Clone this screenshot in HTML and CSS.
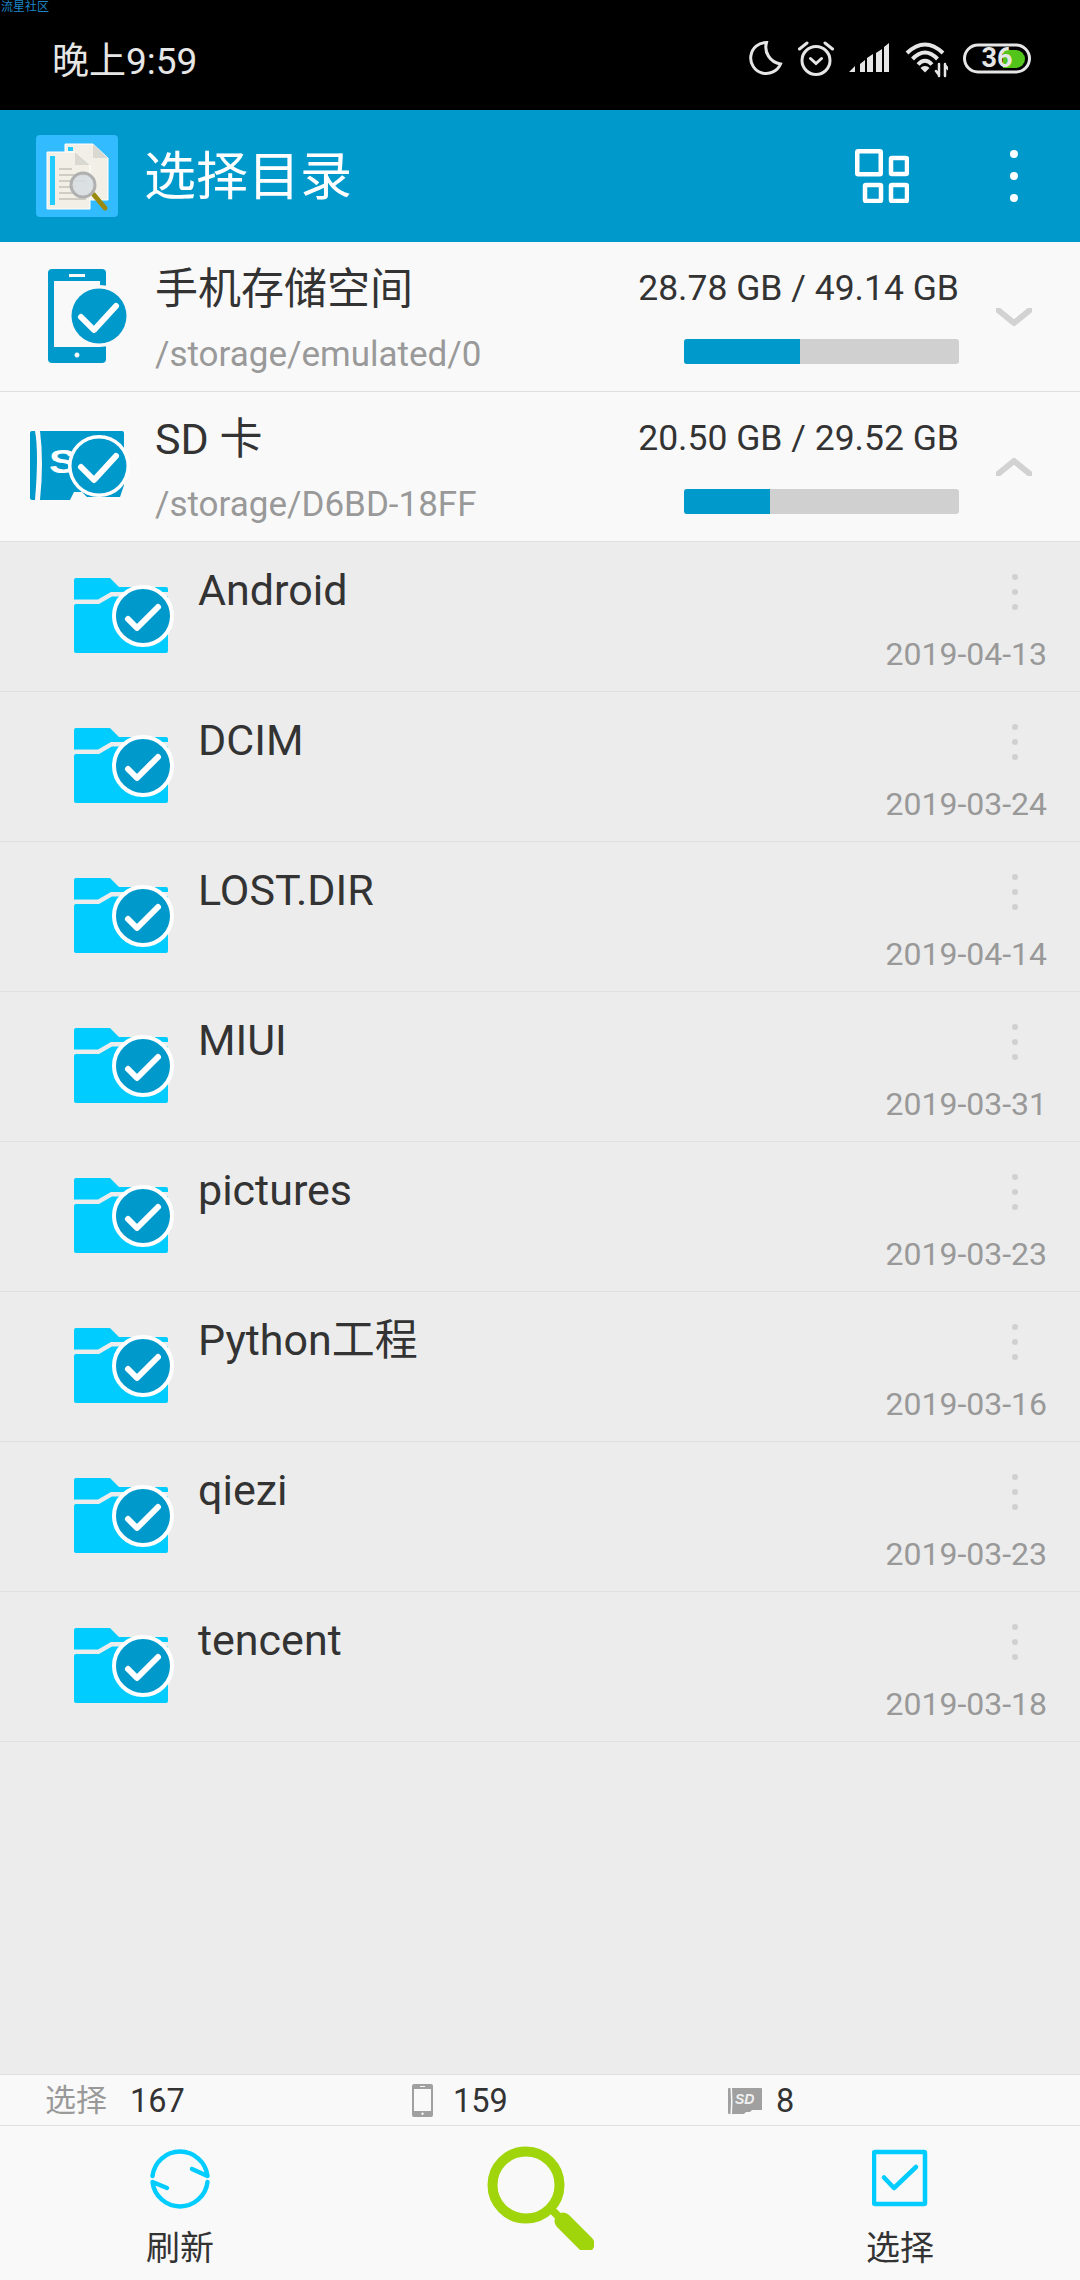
FILE: index.html
```html
<!DOCTYPE html>
<html lang="zh">
<head>
<meta charset="utf-8">
<title>选择目录</title>
<link rel="stylesheet" href="styles.css">
</head>
<body>
<svg class="sprite" width="0" height="0" aria-hidden="true">
  <symbol id="folder" viewBox="0 0 130 110">
    <path class="folder-fill" d="M16 18H50L59 27H106a2 2 0 0 1 2 2V32H51L38 39.500H14V20a2 2 0 0 1 2-2Z"/>
    <path class="folder-fill" d="M16 44H39L52 36.500H108V91a2 2 0 0 1-2 2H16a2 2 0 0 1-2-2V46a2 2 0 0 1 2-2Z"/>
    <circle class="check-ring" cx="83" cy="56" r="29"/>
    <path class="check-mark" d="M68 59L77 68L98 47"/>
  </symbol>
  <symbol id="kebab" viewBox="0 0 10 40">
    <circle cx="5" cy="5" r="3"/>
    <circle cx="5" cy="20" r="3"/>
    <circle cx="5" cy="35" r="3"/>
  </symbol>
</svg>

<div class="app">
  <div class="watermark">流星社区</div>

  <header class="status">
    <span class="time">晚上9:59</span>
    <div class="status-icons">
      <svg class="si" width="34" height="38" viewBox="0 0 34 38"><path class="si-line" d="M17.500 2.500A15.500 15.500 0 1 0 31.500 24A17 17 0 0 1 17.500 2.500Z"/></svg>
      <svg class="si" width="36" height="38" viewBox="0 0 36 38"><circle class="si-line" cx="18" cy="20.500" r="14"/><path class="si-line" d="M12.500 18.500L18 23.500L23.500 18.500M1.500 9L9 3M34.500 9L27 3"/></svg>
      <svg class="si" width="40" height="38" viewBox="0 0 40 38"><path class="si-fill" d="M0 32L6 26V32ZM11 24L16 20V32H11ZM18 18L24 14V32H18ZM27 13L33 9V32H27ZM35 7L40 3V32H35Z"/></svg>
      <svg class="si" width="44" height="38" viewBox="0 0 44 38"><path class="si-line wide" d="M3 13Q21-4 39 13M8.500 19Q21 6 33.500 19M14 24.500Q21 17 28 24.500"/><path class="si-fill" d="M21 26Q24 26 25.500 28L21 32.500L16.500 28Q18 26 21 26Z"/><path class="si-line thin" d="M35 24V36M41 24V36M32 31L35 35M44 29L41 25"/></svg>
      <svg class="si" width="68" height="38" viewBox="0 0 68 38"><rect class="si-line" x="1.500" y="5" width="65" height="27" rx="13.500"/><path class="batt-green" d="M40 10H53a9 9 0 0 1 0 18H40Z"/><text class="batt-num" x="34" y="27" text-anchor="middle">36</text></svg>
    </div>
  </header>

  <div class="appbar">
    <div class="brand">
      <svg class="brand-icon" width="82" height="82" viewBox="0 0 82 82">
        <rect class="brand-bg" width="82" height="82" rx="4"/>
        <path class="page-b" d="M29 9H57L72 23V65H29Z"/>
        <path class="page-fold" d="M57 9V23H72Z"/>
        <rect class="page-strip" x="32" y="12" width="5" height="4"/>
        <path class="page-a" d="M11 17H39L54 30V74H11Z"/>
        <path class="page-fold" d="M39 17V30H54Z"/>
        <rect class="page-strip" x="14" y="21" width="5" height="49"/>
        <path class="page-text" d="M23 34H36M23 40H50M23 46H50M23 52H40M23 58H40M23 64H50"/>
        <path class="loupe-handle" d="M58 60L69 73"/>
        <circle class="loupe" cx="47" cy="50" r="12"/>
      </svg>
      <h1 class="title">选择目录</h1>
    </div>
    <div class="app-actions">
      <svg class="grid-icon" width="54" height="54" viewBox="0 0 54 54">
        <rect x="2.250" y="2.250" width="23.500" height="23" rx="1"/>
        <rect x="36" y="9" width="16" height="16" rx="1"/>
        <rect x="10" y="36" width="16" height="16" rx="1"/>
        <rect x="36" y="36" width="16" height="16" rx="1"/>
      </svg>
      <svg class="dots" width="8" height="52" viewBox="0 0 8 52"><circle cx="4" cy="4" r="4"/><circle cx="4" cy="26" r="4"/><circle cx="4" cy="48" r="4"/></svg>
    </div>
  </div>

  <section class="storage">
    <svg class="st-icon" width="130" height="130" viewBox="0 0 130 130">
      <path class="blue-fill" fill-rule="evenodd" d="M52 27H102a4 4 0 0 1 4 4V117a4 4 0 0 1-4 4H52a4 4 0 0 1-4-4V31a4 4 0 0 1 4-4ZM54 39V105H100V39ZM69 32V35H85V32ZM77 110.500a2.500 2.500 0 1 0 .01 0Z"/>
      <circle class="ring" cx="99" cy="74" r="31"/>
      <circle class="blue-fill" cx="99" cy="74" r="27.500"/>
      <path class="check-mark" d="M81 75L94 88L116 64"/>
    </svg>
    <div class="st-text">
      <div class="st-name">手机存储空间</div>
      <div class="st-path">/storage/emulated/0</div>
    </div>
    <div class="st-usage">
      <div class="st-val">28.78 GB / 49.14 GB</div>
      <div class="bar"><div class="bar-fill" style="width:116px"></div></div>
    </div>
    <svg class="chev" width="36" height="18" viewBox="0 0 36 18"><path d="M2 2L18 15L34 2"/></svg>
  </section>

  <section class="storage">
    <svg class="st-icon" width="130" height="130" viewBox="0 0 130 130">
      <path class="blue-fill" d="M32 39H35Q39 60 35 108H32a2 2 0 0 1-2-2V41a2 2 0 0 1 2-2ZM40 39H122a2 2 0 0 1 2 2V93L120 105H87L82 100H74L70 108H40Q44 70 40 39Z"/>
      <text class="sd-s" transform="translate(49 81) scale(1.250 1)">S</text>
      <circle class="ring-solid" cx="99" cy="74" r="31"/>
      <circle class="blue-fill" cx="99" cy="74" r="27.500"/>
      <path class="check-mark" d="M81 75L94 88L116 64"/>
    </svg>
    <div class="st-text">
      <div class="st-name">SD 卡</div>
      <div class="st-path">/storage/D6BD-18FF</div>
    </div>
    <div class="st-usage">
      <div class="st-val">20.50 GB / 29.52 GB</div>
      <div class="bar"><div class="bar-fill" style="width:86px"></div></div>
    </div>
    <svg class="chev up" width="36" height="18" viewBox="0 0 36 18"><path d="M2 16L18 3L34 16"/></svg>
  </section>

  <main class="list">
    <div class="row"><svg class="folder" width="130" height="110"><use href="#folder"/></svg><div class="name">Android</div><div class="meta"><svg class="kebab" width="10" height="40"><use href="#kebab"/></svg><div class="date">2019-04-13</div></div></div>
    <div class="row"><svg class="folder" width="130" height="110"><use href="#folder"/></svg><div class="name">DCIM</div><div class="meta"><svg class="kebab" width="10" height="40"><use href="#kebab"/></svg><div class="date">2019-03-24</div></div></div>
    <div class="row"><svg class="folder" width="130" height="110"><use href="#folder"/></svg><div class="name">LOST.DIR</div><div class="meta"><svg class="kebab" width="10" height="40"><use href="#kebab"/></svg><div class="date">2019-04-14</div></div></div>
    <div class="row"><svg class="folder" width="130" height="110"><use href="#folder"/></svg><div class="name">MIUI</div><div class="meta"><svg class="kebab" width="10" height="40"><use href="#kebab"/></svg><div class="date">2019-03-31</div></div></div>
    <div class="row"><svg class="folder" width="130" height="110"><use href="#folder"/></svg><div class="name">pictures</div><div class="meta"><svg class="kebab" width="10" height="40"><use href="#kebab"/></svg><div class="date">2019-03-23</div></div></div>
    <div class="row"><svg class="folder" width="130" height="110"><use href="#folder"/></svg><div class="name">Python工程</div><div class="meta"><svg class="kebab" width="10" height="40"><use href="#kebab"/></svg><div class="date">2019-03-16</div></div></div>
    <div class="row"><svg class="folder" width="130" height="110"><use href="#folder"/></svg><div class="name">qiezi</div><div class="meta"><svg class="kebab" width="10" height="40"><use href="#kebab"/></svg><div class="date">2019-03-23</div></div></div>
    <div class="row"><svg class="folder" width="130" height="110"><use href="#folder"/></svg><div class="name">tencent</div><div class="meta"><svg class="kebab" width="10" height="40"><use href="#kebab"/></svg><div class="date">2019-03-18</div></div></div>
  </main>

  <div class="stats">
    <div class="stat"><span class="stat-label">选择</span><span class="stat-num">167</span></div>
    <div class="stat"><svg width="21" height="33" viewBox="0 0 21 33"><path class="grey-fill" fill-rule="evenodd" d="M2 0H19a2 2 0 0 1 2 2V31a2 2 0 0 1-2 2H2a2 2 0 0 1-2-2V2a2 2 0 0 1 2-2ZM2 5V27H19V5ZM8 2V3H13V2ZM10.500 28.500a1.200 1.200 0 1 0 .01 0Z"/></svg><span class="stat-num num-tight">159</span></div>
    <div class="stat sd"><svg width="34" height="26" viewBox="0 0 34 26"><path class="grey-fill" d="M1 0H2.500Q3.500 12 2.500 26H1a1 1 0 0 1-1-1V1a1 1 0 0 1 1-1ZM4 0H33a1 1 0 0 1 1 1V22H24L22 24H18L16 26H4Q5 12 4 0Z"/><text class="sd-mini" x="7" y="16">SD</text></svg><span class="stat-num">8</span></div>
  </div>

  <nav class="nav">
    <div class="nav-item">
      <svg width="64" height="64" viewBox="0 0 64 64"><path class="cyan-line" d="M4.500 28A27.700 27.700 0 0 1 59.500 28L44 21M59.500 34A27.700 27.700 0 0 1 4.500 34L19 40"/></svg>
      <span class="nav-label">刷新</span>
    </div>
    <div class="nav-item search">
      <svg width="108" height="104" viewBox="0 0 108 104"><circle class="lime-ring" cx="40" cy="39" r="33.500"/><path class="lime-neck" d="M64 62L76 74"/><path class="lime-handle" d="M77 75L100 98"/></svg>
    </div>
    <div class="nav-item">
      <svg width="56" height="64" viewBox="0 0 56 64"><rect class="cyan-box" x="2" y="4" width="51" height="52" rx="1"/><path class="cyan-line" d="M12 29.500L22 40L44 19"/></svg>
      <span class="nav-label">选择</span>
    </div>
  </nav>
</div>
</body>
</html>
```
FILE: styles.css
```css
* { box-sizing: border-box; }
html, body { margin: 0; padding: 0; }
body { font-family: Roboto, "Noto Sans CJK SC", sans-serif; color: #333; background: #ececec; }
.sprite { position: absolute; }
.app { position: relative; width: 1080px; height: 2280px; display: flex; flex-direction: column; overflow: hidden; }
.watermark { position: absolute; left: 1px; top: 1px; font-size: 12px; line-height: 13px; color: #1c86c8; }

.status { height: 110px; flex: none; background: #000; display: flex; align-items: center; justify-content: space-between; padding: 8px 49px 0 52px; }
.time { font-size: 37px; color: #e6e6e6; margin-top: -3px; }
.status-icons { display: flex; align-items: center; gap: 15px; }
.si { display: block; }
.si-line { fill: none; stroke: #e6e6e6; stroke-width: 3; stroke-linecap: round; }
.si-line.wide { stroke-width: 4; stroke-linecap: butt; }
.si-line.thin { stroke-width: 2.500; }
.si-fill { fill: #e6e6e6; }
.batt-green { fill: #52c41a; }
.batt-num { font-family: Roboto, sans-serif; font-size: 27px; font-weight: 700; fill: #e6e6e6; }

.appbar { height: 132px; flex: none; background: #0099cc; display: flex; align-items: center; justify-content: space-between; padding: 0 62px 0 36px; }
.brand { display: flex; align-items: center; gap: 26px; }
.brand-icon { display: block; }
.brand-bg { fill: #33bbff; }
.page-a, .page-b { fill: #f2f0e6; stroke: #ffffff; stroke-width: 1; }
.page-fold { fill: #d9d9d2; }
.page-strip { fill: #22ccff; }
.page-text { stroke: #cfcdc4; stroke-width: 2; fill: none; }
.loupe { fill: #d7dde0; fill-opacity: .85; stroke: #b0b0b0; stroke-width: 3; }
.loupe-handle { stroke: #9a8a10; stroke-width: 5; stroke-linecap: round; }
.title { margin: 0; padding-top: 4px; font-size: 52px; font-weight: 400; color: #fff; line-height: 60px; }
.app-actions { display: flex; align-items: center; gap: 101px; }
.grid-icon { display: block; }
.grid-icon rect { fill: none; stroke: #fff; stroke-width: 4.500; }
.dots { display: block; }
.dots circle { fill: #fff; }

.storage { height: 150px; flex: none; background: #f9f9f9; border-bottom: 1px solid #e0e0e0; display: flex; padding-right: 48px; }
.st-icon { flex: none; display: block; margin-right: 25px; }
.blue-fill { fill: #0099cc; }
.ring { fill: #f9f9f9; }
.ring-solid { fill: #fff; }
.sd-s { font-family: "Liberation Sans", sans-serif; font-weight: 700; font-size: 33px; fill: #fff; }
.check-mark { fill: none; stroke: #fff; stroke-width: 6; stroke-linecap: round; stroke-linejoin: round; }
.check-ring { fill: #0099cc; stroke: #fff; stroke-width: 4; }
.st-text { flex: 1; padding-top: 19px; }
.st-name { font-size: 43px; line-height: 56px; color: #333; }
.st-path { font-size: 35px; line-height: 56px; margin-top: 10px; color: #999; }
.st-usage { flex: none; width: 330px; padding-top: 18px; display: flex; flex-direction: column; align-items: flex-end; margin-right: 37px; }
.st-val { font-size: 35.500px; line-height: 56px; color: #333; }
.bar { width: 275px; height: 25px; margin-top: 23px; background: #d0d0d0; border-radius: 3px; overflow: hidden; }
.bar-fill { height: 100%; background: #0099cc; }
.chev { flex: none; margin-top: 66px; display: block; }
.chev path { fill: none; stroke: #d2d2d2; stroke-width: 6; stroke-linecap: round; stroke-linejoin: round; }

.list { flex: 1; background: #ececec; }
.row { height: 150px; border-bottom: 1px solid #e0e0e0; display: flex; padding: 0 33px 0 60px; }
.folder { flex: none; margin-top: 18px; margin-right: 8px; display: block; }
.folder-fill { fill: #00ccff; }
.name { flex: 1; font-size: 43px; line-height: 56px; padding-top: 20px; color: #333; }
.meta { flex: none; display: flex; flex-direction: column; align-items: flex-end; }
.kebab { display: block; fill: #d0d0d0; margin: 30px 27px 0 0; }
.date { font-size: 32px; line-height: 40px; margin-top: 22px; color: #999; }

.stats { height: 52px; flex: none; background: #f9f9f9; border-top: 1px solid #e0e0e0; border-bottom: 1px solid #e0e0e0; display: grid; grid-template-columns: 367px 316px 1fr; padding-left: 45px; padding-top: 1px; align-items: center; }
.stat { display: flex; align-items: center; gap: 21px; }
.stat.sd { gap: 14px; }
.stat-label { font-size: 31px; color: #999; line-height: 48px; margin-right: 2px; }
.stat-num { font-size: 32.500px; line-height: 48px; color: #333; }
.num-tight { margin-left: -1px; }
.stat svg { display: block; flex: none; }
.grey-fill { fill: #a0a0a0; }
.sd-mini { font-family: "Liberation Sans", sans-serif; font-size: 14px; font-weight: 700; font-style: italic; fill: #f0f0f0; }

.nav { height: 154px; flex: none; background: #f9f9f9; display: grid; grid-template-columns: repeat(3, 1fr); }
.nav-item { display: flex; flex-direction: column; align-items: center; padding-top: 22px; }
.nav-item svg { display: block; }
.nav-item.search { padding-top: 20px; }
.nav-label { font-size: 34px; line-height: 44px; margin-top: 14px; color: #333; }
.cyan-line { fill: none; stroke: #00ccff; stroke-width: 4.500; stroke-linecap: round; stroke-linejoin: round; }
.cyan-box { fill: none; stroke: #00ccff; stroke-width: 4.500; }
.lime-ring { fill: none; stroke: #a0d50c; stroke-width: 10; }
.lime-neck { stroke: #a0d50c; stroke-width: 8; }
.lime-handle { stroke: #a0d50c; stroke-width: 17; stroke-linecap: round; }
```
